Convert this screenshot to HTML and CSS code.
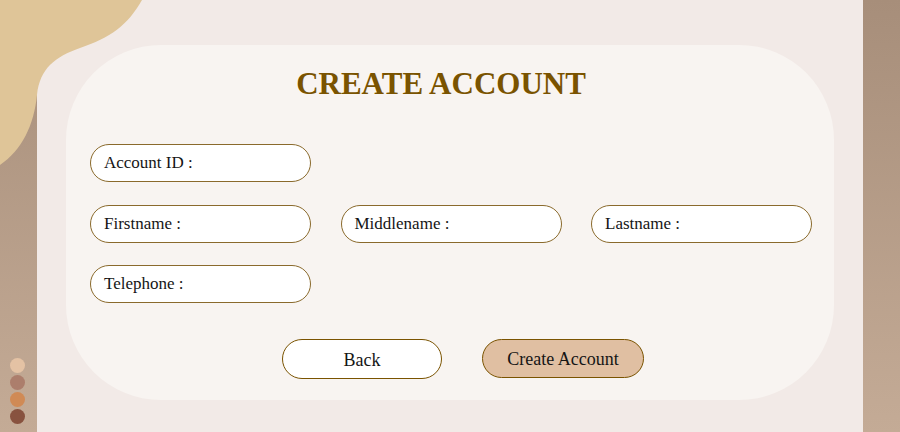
FILE: index.html
```html
<!DOCTYPE html>
<html>
<head>
<meta charset="utf-8">
<link rel="stylesheet" href="styles.css">
</head>
<body>
<div class="page">
  <svg class="blob" width="160" height="170" viewBox="0 0 160 170">
    <path d="M0 0 H142 C128 25 110 38 80 48 C55 57 40 68 37 95 C34 125 22 150 0 165 Z" fill="#dfc598"/>
  </svg>
  <aside class="strip left">
    <div class="dots">
      <span class="dot d1"></span>
      <span class="dot d2"></span>
      <span class="dot d3"></span>
      <span class="dot d4"></span>
    </div>
  </aside>
  <main class="middle">
    <section class="card">
      <h1 class="title">CREATE ACCOUNT</h1>
      <div class="form">
        <div class="field r1 c1">Account ID :</div>
        <div class="field r2 c1">Firstname :</div>
        <div class="field r2 c2">Middlename :</div>
        <div class="field r2 c3">Lastname :</div>
        <div class="field r3 c1">Telephone :</div>
      </div>
      <div class="actions">
        <button class="btn back">Back</button>
        <button class="btn create">Create Account</button>
      </div>
    </section>
  </main>
  <aside class="strip right"></aside>
</div>
</body>
</html>
```
FILE: styles.css
```css
* { box-sizing: border-box; }
html, body { margin: 0; padding: 0; }
body {
  width: 900px;
  height: 432px;
  overflow: hidden;
  font-family: "Liberation Serif", "DejaVu Serif", serif;
}
.page {
  position: relative;
  display: flex;
  width: 900px;
  height: 432px;
}
.blob {
  position: absolute;
  left: 0;
  top: 0;
  z-index: 2;
}
.strip {
  width: 37px;
  height: 432px;
  background: linear-gradient(180deg, #a78e7a 0%, #c4ab96 100%);
}
.strip.left {
  display: flex;
  flex-direction: column;
  justify-content: flex-end;
  padding: 0 0 8px 10px;
}
.dots {
  display: flex;
  flex-direction: column;
  gap: 2px;
}
.dot {
  width: 15px;
  height: 15px;
  border-radius: 50%;
}
.d1 { background: #e4c2a4; }
.d2 { background: #ac7e6c; }
.d3 { background: #d08a55; }
.d4 { background: #88523f; }
.middle {
  width: 826px;
  height: 432px;
  background: #f2eae7;
  padding: 45px 29px 0 29px;
}
.card {
  height: 355px;
  background: #f8f4f1;
  border-radius: 95px;
  padding: 18.5px 24px 0 24px;
}
.title {
  margin: 0;
  padding-right: 18px;
  text-align: center;
  font-size: 31px;
  line-height: 40px;
  font-weight: bold;
  color: #7a5300;
}
.form {
  margin-top: 40.5px;
  display: grid;
  grid-template-columns: 221px 221px 221px;
  grid-template-rows: 38px 38px 38px;
  column-gap: 29.5px;
  row-gap: 22.5px;
}
.r1 { grid-row: 1; }
.r2 { grid-row: 2; }
.r3 { grid-row: 3; }
.c1 { grid-column: 1; }
.c2 { grid-column: 2; }
.c3 { grid-column: 3; }
.field {
  height: 38px;
  border: 1px solid #8a6a2c;
  border-radius: 19px;
  background: #ffffff;
  padding-left: 13px;
  display: flex;
  align-items: center;
  font-size: 17px;
  color: #151515;
}
.actions {
  margin-top: 36px;
  display: flex;
  gap: 40px;
  padding-left: 192px;
}
.btn {
  font-family: "Liberation Serif", "DejaVu Serif", serif;
  font-size: 18px;
  color: #151515;
  border: 1px solid #7a5300;
  border-radius: 20px;
  height: 40px;
  padding: 2px 0 0 0;
  cursor: pointer;
}
.back {
  width: 160px;
  background: #ffffff;
}
.create {
  width: 162px;
  height: 39px;
  margin-top: -0.5px;
  background: #e0bfa2;
}
```
